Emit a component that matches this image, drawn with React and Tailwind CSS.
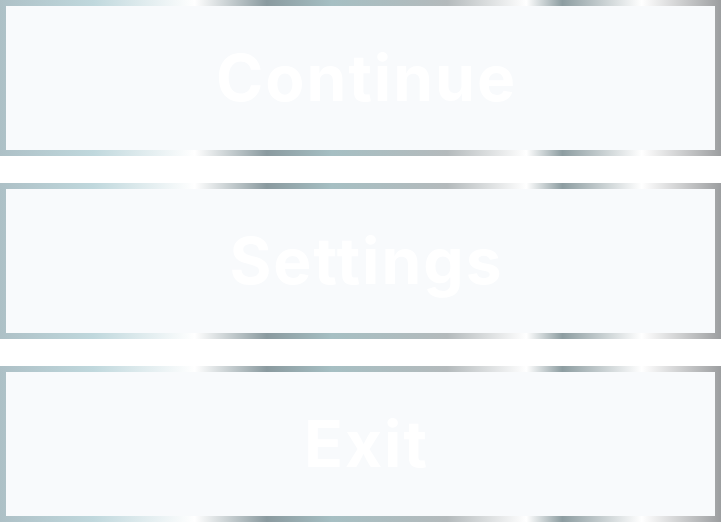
import React from 'react'

const items = ['Continue', 'Settings', 'Exit']

export default function App() {
    return (
        <div className="flex flex-col gap-[27px] w-[721px] h-[522px] bg-white">
            {items.map((label) => (
                <button
                    key={label}
                    className="h-[156px] w-full p-[6px] bg-[linear-gradient(to_right,#adc0c6_0%,#c0d8dd_13%,#ffffff_27%,#8a9a9f_37%,#a6bfc3_46%,#b4babc_62%,#ffffff_73%,#8d9da1_78%,#ffffff_89%,#9c9ea0_100%)]"
                >
                    <div className="h-full w-full bg-[#f8fafc] flex items-center justify-center pl-[12px]">
                        <span className="text-white font-bold text-[64px] leading-none font-['Inter',sans-serif] tracking-[2px]">
                            {label}
                        </span>
                    </div>
                </button>
            ))}
        </div>
    )
}
